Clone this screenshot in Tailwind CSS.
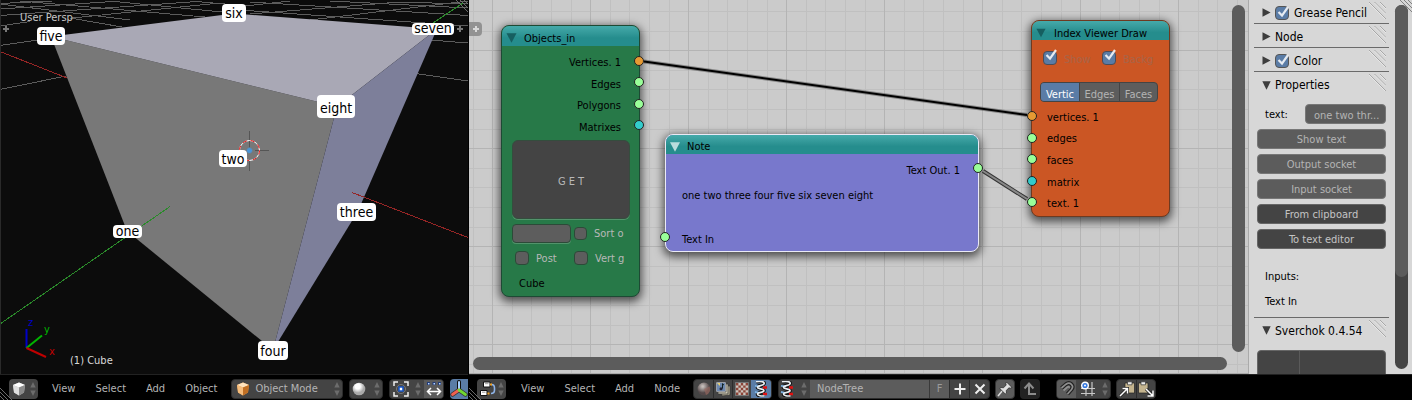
<!DOCTYPE html>
<html lang="en">
<head>
<meta charset="utf-8">
<title>Node editor</title>
<script src="https://cdn.jsdelivr.net/npm/@tailwindcss/browser@4"></script>
</head>
<body class="flex h-screen overflow-hidden bg-black font-['DejaVu_Sans_Condensed','DejaVu_Sans',sans-serif] text-[11px] leading-4 text-black">

<svg class="hidden" aria-hidden="true">
  <symbol id="updown" viewBox="0 0 6 14"><path d="M3 0 5.7 5.4H.3zM3 14 5.7 8.4H.3z" fill="#6c6c6c"/></symbol>
  <symbol id="tick" viewBox="0 0 16 16"><path d="M3.500 7 7 10.600 13 2" fill="none" stroke="#fff" stroke-opacity=".85" stroke-width="2.2"/></symbol>
  <symbol id="right" viewBox="0 0 9 9"><path d="M.5.3V8.700L8.600 4.500z" fill="#3d3d3d"/></symbol>
  <symbol id="down" viewBox="0 0 9 9"><path d="M.3.300H8.700L4.500 8.700z" fill="#3d3d3d"/></symbol>
  <symbol id="grip" viewBox="0 0 17 17"><path d="M0 0 17 17M5.500 0 17 11.500M11 0l6 6" fill="none" stroke="#a2a2a2" stroke-width=".9"/><path d="M0 1 16 17M5.500 1 17 12.500M11 1l6 6" fill="none" stroke="#f2f2f2" stroke-width=".6"/></symbol>
  <symbol id="corner" viewBox="0 0 12 12"><path d="M0 0 12 12M4 0l8 8M8 0l4 4" fill="none" stroke="#777" stroke-width=".9"/></symbol>
  <symbol id="cornerbl" viewBox="0 0 12 12"><path d="M0 0 12 12M0 4l8 8M0 8l4 4" fill="none" stroke="#777" stroke-width=".9"/></symbol>
  <symbol id="helix" viewBox="0 0 16 16">
    <path d="M3 .8C7-.2 12 .5 11 2.800 10 5 4.500 4.200 4.500 6.300c0 2 6.500 1.200 6.500 3.400 0 2-6.500 1.400-6.500 3.400 0 1.700 4 2.200 7 1.700" fill="none" stroke="#111" stroke-width="3.600"/>
    <path d="M2 4.800l5 .5M2 11l4 .8" stroke="#79afe0" stroke-width="1.800"/>
    <path d="M10 6.500h4M10 13h4" stroke="#e01010" stroke-width="2.600"/>
    <path d="M3 .8C7-.2 12 .5 11 2.800 10 5 4.500 4.200 4.500 6.300c0 2 6.500 1.200 6.500 3.400 0 2-6.500 1.400-6.500 3.400 0 1.700 4 2.200 7 1.700" fill="none" stroke="#e8edf2" stroke-width="1.700"/>
  </symbol>
</svg>

<!-- 3D viewport -->
<section class="flex min-w-0 flex-469 flex-col overflow-hidden" aria-label="3D viewport">
  <div class="relative mr-px min-h-0 flex-1 overflow-hidden border-l border-[#2a2a2a] bg-[#0c0c0c]">
    <svg class="absolute top-0 -left-px h-[374px] w-[469px]" viewBox="0 0 469 374" aria-hidden="true" shape-rendering="crispEdges" fill="none">
      <g stroke="#5c5c5c">
        <path d="M0 3.500 52 1M0 9 120 1M0 15.500 190 2M0 26 30 21.500M72 18 220 3M0 45.500 38 40M0 89.500 66 76M70 18 122 27M0 4 130 20M20 1 205 17M120 2 222 12M190 1 236 5"/>
        <path d="M250 14 400 2M250 2 468 15.500M330 1 468 8M240 10 468 26M245 6 290 1M310 20 468 1M430 40 468 43M415 73.500 468 81M395 2 468 4"/>
      </g>
      <path d="M0 51.500 67 78" stroke="#962525"/>
      <path d="M433 23 463 3" stroke="#2a8a2a"/>
      <g shape-rendering="auto">
        <path d="M51 36.500 337 106.500 273 350 127 231z" fill="#787878"/>
        <path d="M51 36.500 234 13.500 437 29 337 106.500z" fill="#a9a8b5"/>
        <path d="M337 106.500 437 29 358 211 273 350z" fill="#7d7f9a"/>
      </g>
      <path d="M0 324 170 206.500" stroke="#2a8a2a"/>
      <path d="M352 192.500 468 237.500" stroke="#962525"/>
      <g shape-rendering="auto">
        <path d="M249.500 131v20M249.500 161v10M229 150.500h10M255 150.500h14" stroke="#555"/>
        <circle cx="249.500" cy="150.500" r="10" stroke="#fff"/>
        <circle cx="249.500" cy="150.500" r="10" stroke="#e11" stroke-dasharray="4 4"/>
        <circle cx="249.500" cy="150.500" r="3" fill="#4a96d8" stroke="#777" stroke-width=".6"/>
        <path d="M26.500 348V329" stroke="#0000c8" stroke-width="2"/>
        <path d="M26.500 348 42 335.500" stroke="#00b400" stroke-width="2"/>
        <path d="M26.500 348 46 357" stroke="#c00000" stroke-width="2"/>
        <path d="M3 29h6M6 26v6M457 29h6M460 26v6" stroke="#777" stroke-width="2"/>
      </g>
    </svg>
    <svg class="absolute top-0 right-0 size-3"><use href="#corner"/></svg>
    <span class="absolute top-[10px] left-[19px] text-[#c8c8c8]">User Persp</span>
    <span class="absolute top-[353px] left-[69px] text-[#d8d8d8]">(1) Cube</span>
    <span class="absolute top-[315px] left-[27px] text-[#0000c8]">z</span>
    <span class="absolute top-[322px] left-[43px] text-[#00b400]">y</span>
    <span class="absolute top-[344px] left-[48px] text-[#c00000]">x</span>
    <div class="text-[14px]">
      <span class="absolute top-[4px] left-[221px] flex h-[18px] w-6 items-center justify-center rounded bg-white">six</span>
      <span class="absolute top-[27px] left-[36px] flex h-[18px] w-7 items-center justify-center rounded bg-white">five</span>
      <span class="absolute top-[23px] left-[411px] flex h-3 w-[42px] items-center justify-center rounded bg-white pb-0.5">seven</span>
      <span class="absolute top-[95px] left-[316px] flex h-[23px] w-[38px] items-center justify-center rounded bg-white pt-0.5">eight</span>
      <span class="absolute top-[150px] left-[218px] flex h-[17px] w-7 items-center justify-center rounded bg-white">two</span>
      <span class="absolute top-[203px] left-[336px] flex h-[18px] w-[39px] items-center justify-center rounded bg-white">three</span>
      <span class="absolute top-[225px] left-[112px] flex h-[13px] w-[29px] items-center justify-center rounded bg-white pb-0.5">one</span>
      <span class="absolute top-[341px] left-[257px] flex h-[19px] w-[30px] items-center justify-center rounded bg-white">four</span>
    </div>
  </div>

  <header class="relative mr-px flex h-[26px] shrink-0 items-center overflow-hidden border-t border-[#222] pt-0.5 pl-[9px] text-[#b4b4b4]">
    <svg class="absolute bottom-0 left-0 size-3"><use href="#cornerbl"/></svg>
    <button class="flex h-5 w-[29px] shrink-0 items-center justify-center gap-1 rounded bg-[#444]" aria-label="Editor type">
      <svg class="size-3.5" viewBox="0 0 14 14"><path d="M7 .5 13 3 12 10.500 7 13.500 2 10.500 1 3z" fill="#bbb"/><path d="M7 .5 13 3 7 5.500 1 3z" fill="#fff"/><path d="M1 3 7 5.500V13.500L2 10.500z" fill="#dedede"/><path d="M13 3 7 5.500V13.500L12 10.500z" fill="#8a8a8a"/></svg>
      <svg class="h-3.5 w-1.5"><use href="#updown"/></svg>
    </button>
    <nav class="ml-[14px] flex gap-5">
      <button>View</button><button>Select</button><button>Add</button><button>Object</button>
    </nav>
    <div class="relative ml-[14px] h-5 w-28 shrink-0">
      <select aria-label="Mode" class="h-5 w-full appearance-none rounded border border-[#2c2c2c] bg-[#444] pl-[23px] text-[#b4b4b4]"><option>Object Mode</option></select>
      <svg class="pointer-events-none absolute top-[3px] left-[5px] size-3.5" viewBox="0 0 14 14"><path d="M7 .5 13 3 12 10.500 7 13.500 2 10.500 1 3z" fill="#e09a4c"/><path d="M7 .5 13 3 7 5.500 1 3z" fill="#ffe3bd"/><path d="M1 3 7 5.500V13.500L2 10.500z" fill="#f6bd7c"/><path d="M13 3 7 5.500V13.500L12 10.500z" fill="#c06f24"/></svg>
      <svg class="pointer-events-none absolute top-[3px] right-[3px] h-3.5 w-1.5"><use href="#updown"/></svg>
    </div>
    <button class="ml-[6px] flex h-5 w-[34px] shrink-0 items-center justify-end gap-2 rounded border border-[#2c2c2c] bg-[#444] pr-[2px]" aria-label="Viewport shading">
      <svg class="size-3.5" viewBox="0 0 14 14"><defs><radialGradient id="ball" cx=".4" cy=".3"><stop offset=".4" stop-color="#fff"/><stop offset="1" stop-color="#aaa"/></radialGradient></defs><circle cx="7" cy="7" r="6.300" fill="url(#ball)"/></svg>
      <svg class="h-3.5 w-1.5"><use href="#updown"/></svg>
    </button>
    <div class="ml-[6px] flex h-5 shrink-0 overflow-hidden rounded border border-[#2c2c2c] bg-[#444]">
      <button class="flex w-[34px] items-center justify-end gap-1.5 pr-[3px]" aria-label="Pivot point">
        <svg class="size-4" viewBox="0 0 16 16" fill="none"><path d="M1 5V1h4M11 1h4v4M15 11v4h-4M5 15H1v-4" stroke="#eee" stroke-width="1.500"/><circle cx="8" cy="8" r="4.500" stroke="#777" stroke-width="1"/><path d="M6 6h4v4H6z" fill="#fff" stroke="#1857c8" stroke-width="1.600"/></svg>
        <svg class="h-3.5 w-1.5"><use href="#updown"/></svg>
      </button>
      <button class="flex w-[19px] items-center justify-center bg-[#5b5b5b]" aria-label="Manipulate centers">
        <svg class="size-4" viewBox="0 0 16 16" fill="none"><path d="M1 1h3v3H1zM6.500 1h3v3h-3zM12 1h3v3h-3z" fill="#223c78"/><path d="M2 2h1.500v1.500H2zM7.500 2H9v1.500H7.500zM13 2h1.500v1.500H13z" fill="#b8d4ff"/><path d="M1.500 10.500h13M5 7 1.500 10.500 5 14M11 7l3.500 3.500L11 14" stroke="#fff" stroke-width="1.500"/></svg>
      </button>
    </div>
    <button class="ml-[6px] flex h-5 w-6 shrink-0 items-center rounded bg-[#5a7ca6]" aria-label="Manipulator">
      <svg class="size-[18px]" viewBox="0 0 18 18" fill="none" stroke-linecap="round"><path d="M9 10V2" stroke="#111" stroke-width="4"/><path d="M9 10 2.500 14.500M9 10l6.500 4.500" stroke="#333" stroke-width="4.500"/><path d="M9 10V2" stroke="#a8d0ff" stroke-width="2"/><path d="M9 10 2.500 14.500" stroke="#f06050" stroke-width="2.800"/><path d="M9 10l6.500 4.500" stroke="#70d830" stroke-width="2.800"/></svg>
    </button>
  </header>
</section>

<!-- Node editor -->
<section class="flex min-w-0 flex-943 flex-col overflow-hidden" aria-label="Node editor">
  <div class="flex min-h-0 flex-1">
    <main class="relative min-w-0 flex-1 overflow-hidden bg-[#cbcbcb]">
      <svg class="absolute inset-0 size-full" aria-hidden="true">
        <defs><pattern id="grid" x="23" y="50" width="98" height="98" patternUnits="userSpaceOnUse">
          <path d="M20.500 0V98M39.500 0V98M59.500 0V98M79.500 0V98M0 20.500H98M0 39.500H98M0 59.500H98M0 79.500H98" stroke="#c0c0c0"/>
          <path d="M.500 0V98M0 .500H98" stroke="#b4b4b4"/>
        </pattern></defs>
        <rect width="100%" height="100%" fill="url(#grid)"/>
      </svg>
      <button class="absolute top-[22px] left-0 flex h-3.5 w-[13px] items-center justify-center rounded-r bg-[#929292]" aria-label="Show tool shelf"><svg class="size-2" viewBox="0 0 8 8"><path d="M4 1v6M1 4h6" stroke="#d8d8d8" stroke-width="2"/></svg></button>

      <article class="absolute top-[25px] left-8 w-[139px] rounded-lg border border-[#1d4a34] bg-[#277948] pb-1 shadow-[0_3px_8px_2px_rgba(0,0,0,0.6)]">
        <h2 class="flex h-5 items-center gap-[7px] rounded-t-[7px] bg-linear-to-b from-[#45aaaa] to-[#258d8d] to-60% pt-1.5 pl-1"><svg class="mb-0.5 h-[10px] w-[11px]" viewBox="0 0 11 10"><path d="M.5.300h10L5.500 9.700z" fill="#165f60"/></svg>Objects_in</h2>
        <ul class="mt-[5px] flex h-[87px] flex-col text-right *:relative *:flex *:flex-1 *:items-center *:justify-end *:pt-0.5 *:pr-[18px]">
          <li>Vertices. 1<i class="absolute top-[5px] -right-[5px] size-[10px] rounded-full border border-[#222] bg-[#e69a33]"></i></li>
          <li>Edges<i class="absolute top-1 -right-[5px] size-[10px] rounded-full border border-[#222] bg-[#99ff99]"></i></li>
          <li>Polygons<i class="absolute top-1 -right-[5px] size-[10px] rounded-full border border-[#222] bg-[#99ff99]"></i></li>
          <li>Matrixes<i class="absolute top-1 -right-[5px] size-[10px] rounded-full border border-[#222] bg-[#33cccc]"></i></li>
        </ul>
        <div class="pr-[9px] pl-[10px] text-[#b8b8b8]">
          <button class="mt-0.5 h-[79px] w-full rounded-md border border-[#344d3d] bg-[#444] pt-1 shadow-[0_1px_0_#52936b]">G E T</button>
          <div class="mt-1 flex h-5 items-center">
            <input aria-label="Name" class="h-[19px] w-[59px] rounded border border-[#2c4a38] bg-[#5d5d5d] shadow-[0_1px_0_#52936b]">
            <label class="flex items-center gap-[7px] pl-[3px] whitespace-nowrap"><input type="checkbox" class="size-[13px] appearance-none rounded border border-[#2c4a38] bg-[#5d5d5d]"><span class="pt-0.5">Sort o</span></label>
          </div>
          <div class="mt-[6px] flex items-center">
            <label class="flex w-[62px] items-center gap-[7px] pl-[3px]"><input type="checkbox" class="size-[14px] appearance-none rounded border border-[#2c4a38] bg-[#5d5d5d]"><span class="pt-0.5">Post</span></label>
            <label class="flex items-center gap-[7px] whitespace-nowrap"><input type="checkbox" class="size-[14px] appearance-none rounded border border-[#2c4a38] bg-[#5d5d5d]"><span class="pt-0.5">Vert g</span></label>
          </div>
        </div>
        <p class="mt-[9px] pl-[17px]">Cube</p>
      </article>

      <article class="absolute top-[134px] left-[196px] flex h-[118px] w-[314px] flex-col rounded-lg border border-[#eaeaf6] bg-[#7878cc] shadow-[0_3px_8px_2px_rgba(0,0,0,0.6)]">
        <h2 class="flex h-[19px] items-center gap-[7px] rounded-t-[7px] bg-linear-to-b from-[#45aaaa] to-[#258d8d] to-60% pt-1 pl-1"><svg class="h-[10px] w-[10px]" viewBox="0 0 10 10"><path d="M0 .300h10L5 9.700z" fill="#b9dcdc"/></svg>Note</h2>
        <p class="relative mt-[9px] pr-[18px] text-right">Text Out. 1<i class="absolute top-0 -right-[5px] size-[10px] rounded-full border border-[#222] bg-[#99ff99]"></i></p>
        <p class="mt-[9px] pl-4">one two three four five six seven eight</p>
        <p class="relative mt-auto mb-[3px] pl-4">Text In<i class="absolute top-0 -left-[6px] size-[10px] rounded-full border border-[#222] bg-[#99ff99]"></i></p>
      </article>

      <article class="absolute top-5 left-[562px] w-[139px] rounded-lg border border-[#6e3a20] bg-[#cb5624] pb-[2px] shadow-[0_3px_8px_2px_rgba(0,0,0,0.6)]">
        <h2 class="flex h-[19px] items-center gap-2 rounded-t-[7px] bg-linear-to-b from-[#45aaaa] to-[#258d8d] to-60% pt-1.5 pl-1 whitespace-nowrap"><svg class="mb-0.5 h-[10px] w-[10px]" viewBox="0 0 11 10"><path d="M.5.300h10L5.500 9.700z" fill="#165f60"/></svg>Index Viewer Draw</h2>
        <div class="mt-2 flex items-center pl-[11px] text-[#a86448]">
          <label class="relative flex w-[59px] items-center gap-[7px]"><input type="checkbox" checked class="size-[14px] appearance-none rounded border border-[#4c4c58] bg-[#5a7ca6]"><svg class="pointer-events-none absolute top-0 left-0 size-4"><use href="#tick"/></svg><span class="pt-1">Show</span></label>
          <label class="relative flex items-center gap-[7px]"><input type="checkbox" checked class="size-[14px] appearance-none rounded border border-[#4c4c58] bg-[#5a7ca6]"><svg class="pointer-events-none absolute top-0 left-0 size-4"><use href="#tick"/></svg><span class="pt-1">Backg</span></label>
        </div>
        <div class="mx-2 mt-[14px] flex h-5 w-[118px] overflow-hidden rounded border border-[#444] bg-[#5d5d5d] text-[#b4b4b4] *:pt-1">
          <button class="w-[38px] bg-[#5a7ca6] text-white">Vertic</button>
          <button class="w-10 border-l border-[#444]">Edges</button>
          <button class="flex-1 border-l border-[#444]">Faces</button>
        </div>
        <ul class="mt-1 flex h-[108px] flex-col *:relative *:flex *:flex-1 *:items-center *:pt-0.5 *:pl-[15px]">
          <li>vertices. 1<i class="absolute top-[5px] -left-[5px] size-[10px] rounded-full border border-[#222] bg-[#e69a33]"></i></li>
          <li>edges<i class="absolute top-[5px] -left-[5px] size-[10px] rounded-full border border-[#222] bg-[#99ff99]"></i></li>
          <li>faces<i class="absolute top-[5px] -left-[5px] size-[10px] rounded-full border border-[#222] bg-[#99ff99]"></i></li>
          <li>matrix<i class="absolute top-[5px] -left-[5px] size-[10px] rounded-full border border-[#222] bg-[#33cccc]"></i></li>
          <li>text. 1<i class="absolute top-[5px] -left-[5px] size-[10px] rounded-full border border-[#222] bg-[#99ff99]"></i></li>
        </ul>
      </article>

      <svg class="pointer-events-none absolute top-0 left-0 h-[374px] w-[780px]" aria-hidden="true" fill="none">
        <path d="M175 61.500 558 115" stroke="#222" stroke-opacity=".4" stroke-width="4"/>
        <path d="M175 61.500 558 115" stroke="#000" stroke-width="2"/>
        <path d="M514 171 558 199" stroke="#333" stroke-width="4"/>
        <path d="M514 171 558 199" stroke="#888" stroke-width="2"/>
      </svg>

      <div class="absolute top-[5px] right-[3px] bottom-[22px] w-[13px] rounded-full bg-[#5c5c5c]"></div>
      <div class="absolute right-[21px] bottom-1 left-1 h-[13px] rounded-full bg-[#5c5c5c]"></div>
      <div class="absolute inset-x-0 bottom-0 h-px bg-[#aaa]"></div>
    </main>

    <aside class="relative flex w-[164px] shrink-0 overflow-hidden border-l border-[#aaa] bg-[#d7d7d7]">
      <div class="ml-[5px] w-[135px] text-[12px]">
        <h3 class="relative flex h-6 items-center border-b border-[#6a6a6a] pt-0.5 pl-2"><svg class="mr-1 size-[9px]"><use href="#right"/></svg>
          <label class="relative flex items-center gap-[5px]"><input type="checkbox" checked class="size-[14px] appearance-none rounded border border-[#555] bg-[#5a7ca6]"><svg class="pointer-events-none absolute top-0 left-0 size-4"><use href="#tick"/></svg>Grease Pencil</label>
          <svg class="absolute top-0.5 right-[3px] size-[17px]"><use href="#grip"/></svg></h3>
        <h3 class="relative flex h-6 items-center border-b border-[#6a6a6a] pt-0.5 pl-2"><svg class="mr-1 size-[9px]"><use href="#right"/></svg>Node<svg class="absolute top-0.5 right-[3px] size-[17px]"><use href="#grip"/></svg></h3>
        <h3 class="relative flex h-6 items-center border-b border-[#6a6a6a] pt-0.5 pl-2"><svg class="mr-1 size-[9px]"><use href="#right"/></svg>
          <label class="relative flex items-center gap-[5px]"><input type="checkbox" checked class="size-[14px] appearance-none rounded border border-[#555] bg-[#5a7ca6]"><svg class="pointer-events-none absolute top-0 left-0 size-4"><use href="#tick"/></svg>Color</label>
          <svg class="absolute top-0.5 right-[3px] size-[17px]"><use href="#grip"/></svg></h3>
        <h3 class="relative flex h-6 items-center pt-0.5 pl-2"><svg class="mr-1 size-[9px]"><use href="#down"/></svg>Properties<svg class="absolute top-0.5 right-[3px] size-[17px]"><use href="#grip"/></svg></h3>
        <div class="mt-2 flex flex-col gap-[5px] pr-[3px] pl-[3px] text-[11px]">
          <div class="flex h-5 items-center justify-between pl-2"><label for="text" class="pt-0.5">text:</label><input id="text" value="one two thr..." class="h-5 w-[81px] rounded border border-[#777] bg-[#5c5c5c] pt-0.5 pl-2 text-[#b4b4b4]"></div>
          <button class="h-5 rounded border border-[#777] bg-[#5c5c5c] pt-0.5 text-[#b4b4b4]">Show text</button>
          <button class="h-5 rounded border border-[#777] bg-[#5c5c5c] pt-0.5 text-[#b4b4b4]">Output socket</button>
          <button class="h-5 rounded border border-[#777] bg-[#5c5c5c] pt-0.5 text-[#b4b4b4]">Input socket</button>
          <button class="h-5 rounded border border-[#666] bg-[#444] pt-0.5 text-[#c4c4c4]">From clipboard</button>
          <button class="h-5 rounded border border-[#666] bg-[#444] pt-0.5 text-[#c4c4c4]">To text editor</button>
          <p class="mt-[13px] flex h-5 items-center pl-2">Inputs:</p>
          <p class="flex h-5 items-center pl-2">Text In</p>
        </div>
        <h3 class="relative mt-[5px] flex h-[26px] items-center border-t border-[#6a6a6a] pl-2"><svg class="mr-1 size-[9px]"><use href="#down"/></svg>Sverchok 0.4.54<svg class="absolute top-0.5 right-[3px] size-[17px]"><use href="#grip"/></svg></h3>
        <div class="mx-[3px] mt-[7px] flex h-10 rounded border border-[#666] bg-[#444]"><span class="w-[42px] border-r border-[#5a5a5a]"></span></div>
      </div>
      <div class="absolute top-[5px] right-1 bottom-[5px] w-[13px] rounded-full bg-[#444]"><div class="h-[272px] rounded-full bg-[#5c5c5c]"></div></div>
      <svg class="absolute top-0 right-0 size-3"><use href="#corner"/></svg>
    </aside>
  </div>

  <header class="relative flex h-[26px] shrink-0 items-center overflow-hidden border-t border-[#222] pt-0.5 pl-2 text-[#b4b4b4]">
    <svg class="absolute bottom-0 left-0 size-3"><use href="#cornerbl"/></svg>
    <button class="flex h-5 w-[29px] shrink-0 items-center justify-center gap-0.5 rounded bg-[#444]" aria-label="Editor type">
      <svg class="size-4" viewBox="0 0 16 16" fill="none"><path d="M10.500 3.500h1c2 0 3 1 3 3.500v2c0 2.500-1.500 3.500-3.500 3.500" stroke="#8fb4e8" stroke-width="1.600"/><path d="M3.500 1h6.500v5h-6.500zM.5 9.500h6.500v5H.5z" fill="#fff" stroke="#111"/><path d="M5 2.700h3.500M2 11.200h3.500" stroke="#999"/><path d="M10 3.500h2M7.500 12.500h2" stroke="#f0a020" stroke-width="2"/></svg>
      <svg class="h-3.5 w-1.5"><use href="#updown"/></svg>
    </button>
    <nav class="ml-[15px] flex gap-5">
      <button>View</button><button>Select</button><button>Add</button><button>Node</button>
    </nav>
    <div class="ml-[13px] flex h-5 shrink-0 overflow-hidden rounded border border-[#2c2c2c] bg-[#444] *:flex *:w-[19px] *:items-center *:justify-center">
      <button aria-label="Shader nodes"><svg class="size-3.5" viewBox="0 0 14 14"><defs><radialGradient id="mat" cx=".4" cy=".3"><stop offset=".1" stop-color="#c4bcb8"/><stop offset="1" stop-color="#54494a"/></radialGradient></defs><circle cx="7" cy="7" r="6.500" fill="url(#mat)"/><path d="M7 7 12.500 4.500A6.200 6.200 0 0 1 9 13z" fill="#9c6a60" opacity=".6"/></svg></button>
      <button class="border-l border-[#2c2c2c]" aria-label="Compositing nodes"><svg class="size-4" viewBox="0 0 16 16"><path d="M5 5h10v9l-8 1z" fill="#b5ae96" stroke="#333" stroke-width=".7"/><path d="M3 3h10v10H3z" fill="#cfcab4" stroke="#333" stroke-width=".7"/><path d="M1 1h10v10H1z" fill="#c9d0dc" stroke="#444" stroke-width=".7"/><path d="M2 2h8v8H2z" fill="#6d88ae"/><path d="M7.500 2.500v5M7.500 3 9 4" stroke="#122" fill="none"/><circle cx="6" cy="7.800" r="1.500" fill="#223"/><path d="M2 2h3v3z" fill="#e8cf70"/></svg></button>
      <button class="border-l border-[#2c2c2c]" aria-label="Texture nodes"><svg class="size-3.5" viewBox="0 0 14 14"><path d="M.5.500h13v13H.5z" fill="#ccc4bc" stroke="#777"/><path d="M1 1h2.400v2.400H1zM5.800 1h2.400v2.400H5.800zM10.600 1H13v2.400h-2.400zM3.400 3.400h2.400v2.400H3.400zM8.200 3.400h2.400v2.400H8.200zM1 5.800h2.400v2.400H1zM5.800 5.800h2.400v2.400H5.800zM10.600 5.800H13v2.400h-2.400zM3.400 8.200h2.400v2.400H3.400zM8.200 8.200h2.400v2.400H8.200zM1 10.600h2.400V13H1zM5.800 10.600h2.400V13H5.800zM10.600 10.600H13V13h-2.400z" fill="#8c4438"/></svg></button>
      <button class="w-5! bg-[#5a7ca6]" aria-label="Sverchok nodes"><svg class="size-4"><use href="#helix"/></svg></button>
    </div>
    <div class="ml-[6px] flex h-5 shrink-0 overflow-hidden rounded border border-[#2c2c2c] bg-[#444]">
      <button class="flex w-[31px] items-center justify-end gap-1.5 pr-[3px]" aria-label="Browse node tree"><svg class="size-4"><use href="#helix"/></svg><svg class="h-3.5 w-1.5"><use href="#updown"/></svg></button>
      <input value="NodeTree" aria-label="Node tree name" class="w-[119px] bg-[#5c5c5c] pl-[7px] text-[#b4b4b4]">
      <button class="w-5 border-l border-[#3a3a3a] bg-[#5c5c5c] text-[#9a9a9a]">F</button>
      <button class="flex w-5 items-center justify-center border-l border-[#2c2c2c]" aria-label="New"><svg class="size-3" viewBox="0 0 12 12"><path d="M6 .5v11M.5 6h11" stroke="#eee" stroke-width="2"/></svg></button>
      <button class="flex w-5 items-center justify-center border-l border-[#2c2c2c]" aria-label="Unlink"><svg class="size-3" viewBox="0 0 12 12"><path d="M1.500 1.500l9 9M10.500 1.500l-9 9" stroke="#eee" stroke-width="2"/></svg></button>
    </div>
    <button class="ml-[5px] flex size-5 shrink-0 items-center justify-center rounded border border-[#333] bg-[#5c5c5c]" aria-label="Pin"><svg class="size-4" viewBox="0 0 16 16"><path d="M1 15 6 9" stroke="#ddd" stroke-width="1.500"/><path d="M9.500 1 15 6.500 13.200 7.200 12 6.800 9.200 9.500 9.500 12 8.300 13 2.800 7.500 4 6.500 6.500 6.800 9.200 4 8.800 2.500z" fill="#e0e0e0" stroke="#222" stroke-width=".7"/></svg></button>
    <button class="ml-[5px] flex size-5 shrink-0 items-center justify-center rounded bg-[#222]" aria-label="Parent node tree"><svg class="size-4" viewBox="0 0 16 16" fill="none"><path d="M7 2.500V13h7M2.500 7.500 7 2.500l4.500 5" stroke="#8c8c8c" stroke-width="2"/></svg></button>
    <div class="ml-4 flex h-5 shrink-0 overflow-hidden rounded border border-[#2c2c2c] bg-[#444]">
      <button class="flex w-[19px] items-center justify-center bg-[#5c5c5c]" aria-label="Snap"><svg class="size-4" viewBox="0 0 16 16" fill="none"><path d="M2.500 7 7 3.200c4-3 8.500 1.500 5.500 5.300L8.500 13" stroke="#222" stroke-width="4"/><path d="M2.500 7 7 3.200c4-3 8.500 1.500 5.500 5.300L8.500 13M4.500 9.500 8.500 6c1.500-1 2 0 1.200 1" stroke="#8f8f8f" stroke-width="1.700"/></svg></button>
      <button class="flex w-[34px] items-center justify-end gap-1.5 pr-0.5" aria-label="Snap element"><svg class="size-4" viewBox="0 0 16 16" fill="none"><path d="M6 2v13M12 1v14M1 7.500h14M1 12.500h14" stroke="#c8c8c8" stroke-width="1.200"/><circle cx="5" cy="4.500" r="3.300" fill="#3478e0" stroke="#fff" stroke-width="1.400"/><circle cx="5" cy="4.500" r="1" fill="#fff"/></svg><svg class="h-3.5 w-1.5"><use href="#updown"/></svg></button>
    </div>
    <div class="ml-[5px] flex h-5 shrink-0 overflow-hidden rounded border border-[#2c2c2c] bg-[#444] *:flex *:w-[19px] *:items-center *:justify-center">
      <button aria-label="Copy"><svg class="size-4" viewBox="0 0 16 16" fill="none"><path d="M6 2h9.500v10H6z" fill="#c4b48e" stroke="#222" stroke-width=".7"/><path d="M8.500.800h4.500v3H8.500z" fill="#eee" stroke="#333" stroke-width=".7"/><path d="M1 15 8 8M3.500 7.500H8.500v5" stroke="#222" stroke-width="3"/><path d="M1 15 8 8M3.500 7.500H8.500v5" stroke="#fff" stroke-width="1.500"/></svg></button>
      <button class="border-l border-[#2c2c2c]" aria-label="Paste"><svg class="size-4" viewBox="0 0 16 16" fill="none"><path d="M.5 2H10v10H.5z" fill="#c4b48e" stroke="#222" stroke-width=".7"/><path d="M3 .800h4.500v3H3z" fill="#eee" stroke="#333" stroke-width=".7"/><path d="M8 8l6.500 6.500M15 9.500v5.500H9.500" stroke="#222" stroke-width="3"/><path d="M8 8l6.500 6.500M15 9.500v5.500H9.500" stroke="#fff" stroke-width="1.500"/></svg></button>
    </div>
  </header>
</section>
</body>
</html>
